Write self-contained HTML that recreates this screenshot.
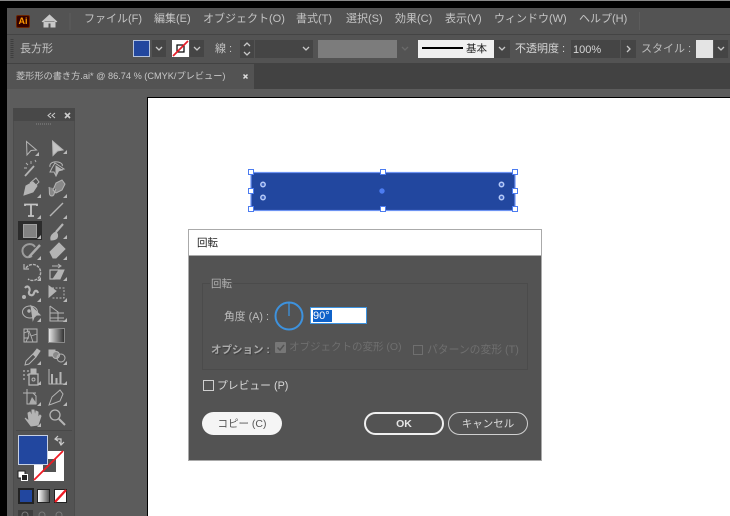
<!DOCTYPE html>
<html><head><meta charset="utf-8">
<style>
html,body{margin:0;padding:0;width:730px;height:516px;overflow:hidden;background:#000}
*{box-sizing:border-box}
body{font-family:"Liberation Sans","Noto Sans CJK JP",sans-serif;position:relative}
#w{position:absolute;left:0;top:0;width:730px;height:516px;overflow:hidden;filter:blur(.35px)}
.a{position:absolute}
.t{position:absolute;white-space:nowrap;line-height:14px;font-size:11px;color:#c4c4c4}
.dd{position:absolute;background:#454545}
svg{position:absolute;left:0;top:0}
</style></head><body><div id="w">
<!-- chrome backgrounds -->
<div class="a" style="left:0;top:0;width:730px;height:1px;background:#888"></div>
<div class="a" style="left:7px;top:8px;width:723px;height:26px;background:#535353"></div>
<div class="a" style="left:7px;top:34px;width:723px;height:1px;background:#444"></div>
<div class="a" style="left:7px;top:35px;width:723px;height:28px;background:#535353"></div>
<div class="a" style="left:7px;top:63px;width:723px;height:26px;background:#424242"></div>
<div class="a" style="left:7px;top:64px;width:247px;height:25px;background:#535353"></div>
<div class="a" style="left:7px;top:89px;width:723px;height:427px;background:#5c5c5c"></div>
<div class="a" style="left:147px;top:97px;width:583px;height:419px;background:#000"></div>
<div class="a" style="left:148px;top:98px;width:582px;height:418px;background:#fff"></div>
<div class="a" style="left:639px;top:12px;width:1px;height:18px;background:#5c5c5c"></div>

<!-- menu -->
<div class="a" style="left:16px;top:15px;width:14px;height:13px;background:#330000;border:1px solid #6b2400;border-radius:2px;color:#ff9a00;font:bold 9px/11px 'Liberation Sans',sans-serif;text-align:center">Ai</div>
<div class="t" style="left:84px;top:12px;font-size:11px">ファイル(F)</div>
<div class="t" style="left:154px;top:12px">編集(E)</div>
<div class="t" style="left:203px;top:12px">オブジェクト(O)</div>
<div class="t" style="left:296px;top:12px">書式(T)</div>
<div class="t" style="left:346px;top:12px">選択(S)</div>
<div class="t" style="left:395px;top:12px">効果(C)</div>
<div class="t" style="left:445px;top:12px">表示(V)</div>
<div class="t" style="left:494px;top:12px">ウィンドウ(W)</div>
<div class="t" style="left:579px;top:12px">ヘルプ(H)</div>

<!-- control bar -->
<div class="t" style="left:20px;top:42px">長方形</div>
<div class="a" style="left:133px;top:40px;width:17px;height:17px;background:#22479f;border:1px solid #b5c3dc"></div>
<div class="dd" style="left:152px;top:40px;width:14px;height:17px"></div>
<div class="a" style="left:172px;top:40px;width:17px;height:17px;background:#fff"></div>
<div class="dd" style="left:190px;top:40px;width:14px;height:17px"></div>
<div class="t" style="left:215px;top:42px">線 :</div>
<div class="dd" style="left:240px;top:40px;width:14px;height:18px"></div>
<div class="dd" style="left:255px;top:40px;width:44px;height:18px"></div>
<div class="dd" style="left:299px;top:40px;width:14px;height:18px"></div>
<div class="a" style="left:318px;top:40px;width:79px;height:18px;background:#7c7c7c"></div>
<div class="a" style="left:418px;top:40px;width:76px;height:18px;background:#f0f0f0"></div>
<div class="a" style="left:422px;top:47px;width:41px;height:2px;background:#000"></div>
<div class="t" style="left:466px;top:42px;color:#222;font-size:10.5px">基本</div>
<div class="dd" style="left:494px;top:40px;width:16px;height:18px"></div>
<div class="t" style="left:515px;top:42px;color:#d6d6d6">不透明度 :</div>
<div class="dd" style="left:571px;top:40px;width:49px;height:18px"></div>
<div class="t" style="left:573px;top:43px;color:#d6d6d6;font-size:11px">100%</div>
<div class="dd" style="left:621px;top:40px;width:15px;height:18px"></div>
<div class="t" style="left:641px;top:42px;color:#bbb">スタイル :</div>
<div class="a" style="left:696px;top:40px;width:17px;height:18px;background:#e4e4e4"></div>
<div class="dd" style="left:714px;top:40px;width:14px;height:18px"></div>

<!-- tab -->
<div class="t" style="left:16px;top:69px;font-size:9.2px;color:#c8c8c8">菱形形の書き方.ai* @ 86.74 % (CMYK/プレビュー)</div>

<!-- tool panel -->
<div class="a" style="left:13px;top:108px;width:62px;height:408px;background:#535353;border:1px solid #4c4c4c;border-bottom:0"></div>
<div class="a" style="left:13px;top:108px;width:62px;height:13px;background:#484848"></div>
<div class="a" style="left:18px;top:221px;width:24px;height:19px;background:#2c2c2c"></div>
<div class="a" style="left:16px;top:430px;width:56px;height:1px;background:#484848"></div>
<div class="a" style="left:49px;top:329px;width:15px;height:13px;background:linear-gradient(90deg,#e4e4e4,#333);outline:1px solid #8a8a8a"></div>

<!-- swatches -->
<div class="a" style="left:34px;top:451px;width:30px;height:30px;background:#fff"></div>
<div class="a" style="left:43px;top:459px;width:13px;height:13px;background:#535353"></div>
<div class="a" style="left:18px;top:435px;width:30px;height:30px;background:#22479f;border:1px solid #c6d0e4"></div>
<div class="a" style="left:20px;top:490px;width:12px;height:12px;background:#22479f;outline:2px solid #222"></div>
<div class="a" style="left:38px;top:490px;width:11px;height:12px;background:linear-gradient(90deg,#fff,#555);outline:1px solid #222"></div>
<div class="a" style="left:55px;top:490px;width:11px;height:12px;background:#fff;outline:1px solid #222"></div>
<div class="a" style="left:18px;top:510px;width:15px;height:6px;background:#3e3e3e"></div>

<!-- all vector icons -->
<svg width="730" height="516" viewBox="0 0 730 516" fill="none">
 <!-- home -->
 <path d="M42 22 49.500 15 57 22M44 21V27H48V23H51V27H55V21Z" fill="#c9c9c9" stroke="#c9c9c9"/>
 <path d="M70 13V30" stroke="#5c5c5c"/>
 <path d="M12 39V59" stroke="#3e3e3e" stroke-width="3" stroke-dasharray="1 1"/>
 <!-- dropdown chevrons -->
 <g stroke="#c8c8c8" stroke-width="1.300">
  <path d="M156 47 159 50 162 47M194 47 197 50 200 47M303 47 306 50 309 47M499 47 502 50 505 47M718 47 721 50 724 47"/>
  <path d="M244 46 247 43 250 46M244 52 247 55 250 52"/>
  <path d="M627 46 630 49 627 52"/>
  <path d="M402 47 405 50 408 47" stroke="#6a6a6a"/>
 </g>
 <!-- stroke swatch -->
 <rect x="177" y="45" width="7" height="7" stroke="#000" stroke-width="1.200"/>
 <path d="M173 56 188 41" stroke="#e8202a" stroke-width="1.800"/>
 <!-- tab close -->
 <path d="M243.500 74.500 247.500 78.500M247.500 74.500 243.500 78.500" stroke="#ddd" stroke-width="1.500"/>
 <!-- panel header -->
 <path d="M51 113 48 115.500 51 118M55 113 52 115.500 55 118" stroke="#ccc"/>
 <path d="M65 113 70 118M70 113 65 118" stroke="#ccc" stroke-width="1.600"/>
 <path d="M36 124H52" stroke="#6d6d6d" stroke-width="2" stroke-dasharray="1 1"/>

 <g stroke="#b4b4b4" fill="none" stroke-width="1">
 <!-- r1 -->
 <path d="M26.500 141.500 36.500 150 31 150.500 27 155Z"/>
 <path d="M52.500 141 63 150 57.500 151 53 155.500Z" fill="#c4c4c4"/>
 <!-- r2 -->
 <path d="M25 176 34 166" stroke-width="1.800"/>
 <path d="M31 161V164M26 163 28 165M35 160 36 162M24 168H27" stroke-width=".9"/>
 <path d="M50 167C49 163 54 161 58 162 62 163 63 165 62 166M55 163 64 169 59 170 56 176 54 172 50 172 52 168Z"/>
 <path d="M56 166 62 170 58 171 56 174Z" fill="#b4b4b4"/>
 <!-- r3 -->
 <path d="M24 195 26 186 33 182 37 186 33 192Z" fill="#b4b4b4"/>
 <path d="M30 183 36 178 39 182 35 186"/>
 <path d="M49 187C50 191 48 196 52 196 55 196 54 191 56 189M53 190 56 183 62 180 65 184 62 190 56 193Z" fill="#b4b4b4" fill-opacity=".55"/>
 <!-- r4 -->
 <path d="M25 206V204.500H37V206M31 205V216M28 216H34" stroke-width="1.800" stroke="#c4c4c4"/>
 <path d="M50 216 63 203" stroke-width="1.400"/>
 <!-- r5 -->
 <rect x="23.500" y="224.500" width="13" height="13" fill="#828282" stroke="#a0a0a0"/>
 <path d="M51 240C50 236 53 233 56 232 58 234 58 236 57 238 55 240 53 240 51 240Z" fill="#b4b4b4"/>
 <path d="M56 232 63 224" stroke-width="2.200"/>
 <!-- r6 -->
 <path d="M32 256C25 260 21 253 23 248 26 243 33 243 35 247" stroke-width="2" stroke="#9c9c9c"/>
 <path d="M29 257 40 245" stroke-width="2.500" stroke="#aaa"/>
 <path d="M50 252 59 243 65 249 56 258 53 258Z" fill="#b4b4b4"/>
 <!-- r7 -->
 <path d="M26 268A8 8 0 1 1 28 279" stroke-width="1.400" stroke-dasharray="3 1"/>
 <path d="M24 264V269H29" stroke-width="1.200"/>
 <path d="M50 270H59L55 279H50Z" stroke-width="1.200"/>
 <path d="M59 270H64L60 279H53Z" fill="#b4b4b4"/>
 <path d="M52 266H60M58 264 61 266 58 268"/>
 <!-- r8 -->
 <path d="M25 288C28 284 31 289 29 292 28 295 33 297 34 293 35 290 37 290 38 293" stroke-width="2.200"/>
 <circle cx="24" cy="297" r="1.500" fill="#b4b4b4"/>
 <path d="M49 286 56 291 49 297Z" fill="#b4b4b4"/>
 <path d="M52 288H64V298H52" stroke-dasharray="2 1.500"/>
 <!-- r9 -->
 <ellipse cx="30" cy="312" rx="7.500" ry="6"/>
 <path d="M31 306 40 315 35 315 33 320Z" fill="#b4b4b4"/>
 <circle cx="29" cy="311" r="1.200" fill="#b4b4b4"/>
 <path d="M50 306V321H65M50 306 58 312V321M50 313H64M50 318H64"/>
 <!-- r10 -->
 <rect x="24" y="329" width="13" height="13"/>
 <path d="M24 333 29 331 31 336 37 334M27 329 29 335 26 342M31 336 33 342M24 338H29" stroke-width=".9"/>
 <!-- r11 -->
 <path d="M25 365 26 361 33 354 36 357 29 364Z"/>
 <path d="M33 354 37 349 40 351 36 357" fill="#b4b4b4"/>
 <path d="M49 350H55V356H49Z" fill="#b4b4b4"/>
 <circle cx="56" cy="355" r="3.500" fill="#888"/>
 <circle cx="61" cy="358" r="4"/>
 <!-- r12 -->
 <path d="M23 371H25M27 371H29M31 371H33M23 375H25M27 375H29M23 379H25" stroke-width="1.200"/>
 <rect x="29" y="374" width="9" height="11" stroke-width="1.300"/>
 <circle cx="33.500" cy="379.500" r="1.500"/>
 <path d="M31 374V369H36V374" fill="#b4b4b4"/>
 <path d="M49 369V384H65" />
 <path d="M52 374V384M56.500 378V384M60.500 372V384" stroke-width="2"/>
 <!-- r13 -->
 <path d="M27 389V404H36V396L33 393H27M23 393H36" />
 <path d="M32 397 37 404H29Z" fill="#aaa" stroke="none"/>
 <path d="M49 405 52 397 60 390 63 394 60 401 52 404Z"/>
 <!-- r14 -->
 <path d="M25 418 29 421 28 413 30 412 32 417 32 410 34 410 35 417 36 411 38 412 38 418 40 415 41 416 38 425 31 426Z" fill="#b4b4b4"/>
 <circle cx="55" cy="415" r="5" stroke-width="1.300"/>
 <path d="M59 419 65 425" stroke-width="2"/>
 <!-- swap/default -->
 <path d="M58 436 55 439 58 441M55 439H61V444M59 441.500 61 445 64 442" stroke-width="1.200" stroke="#ccc"/>
 <rect x="18" y="471" width="7" height="7" fill="#fff" stroke="#222"/>
 <rect x="21.500" y="474.500" width="6" height="6" fill="#222" stroke="#fff"/>
 </g>
 <path d="M34 480 63 451" stroke="#f01b24" stroke-width="1.800"/>
 <path d="M55 502 66 490" stroke="#f01b24" stroke-width="2.400"/>
 <g fill="#b8b8b8" stroke="none" transform="translate(-1 -1)">
  <path d="M40 157V153L36 157ZM68 155V151L64 155ZM42 199V195L38 199ZM68 199V195L64 199ZM42 220V216L38 220ZM68 220V216L64 220ZM42 240V236L38 240ZM68 240V236L64 240ZM42 261V257L38 261ZM68 261V257L64 261ZM42 282V278L38 282ZM68 282V278L64 282ZM42 303V299L38 303ZM68 303V299L64 303ZM42 323V319L38 323ZM68 323V319L64 323ZM42 366V362L38 366ZM68 366V362L64 366ZM42 386V382L38 386ZM68 386V382L64 386ZM42 407V403L38 407ZM68 407V403L64 407ZM42 428V424L38 428Z"/>
 </g>
 <g stroke="#7a7a7a"><circle cx="25" cy="515" r="3"/><circle cx="42" cy="515" r="3"/><circle cx="59" cy="515" r="3"/></g>

 <!-- selection shape -->
 <rect x="251" y="172.500" width="264" height="38" fill="#22479f" stroke="#6d93f2" stroke-width="1.200"/>
 <g fill="#fff" stroke="#4c7cf0">
  <rect x="248.500" y="169.500" width="5" height="5"/><rect x="380.500" y="169.500" width="5" height="5"/><rect x="512.500" y="169.500" width="5" height="5"/>
  <rect x="248.500" y="188.500" width="5" height="5"/><rect x="512.500" y="188.500" width="5" height="5"/>
  <rect x="248.500" y="206.500" width="5" height="5"/><rect x="380.500" y="206.500" width="5" height="5"/><rect x="512.500" y="206.500" width="5" height="5"/>
 </g>
 <circle cx="382" cy="191" r="2.700" fill="#4c7cf0"/>
 <g fill="#3d62bd" stroke="#b4c8f7" stroke-width="1.500">
  <circle cx="263" cy="184.500" r="2.200"/><circle cx="263" cy="197.500" r="2.200"/><circle cx="501.500" cy="184.500" r="2.200"/><circle cx="501.500" cy="197.500" r="2.200"/>
 </g>
</svg>

<!-- dialog -->
<div class="a" style="left:188px;top:229px;width:354px;height:232px;background:#535353;border:1px solid #aaa">
 <div class="a" style="left:0;top:0;width:352px;height:26px;background:#fff;border-bottom:1px solid #aaa"></div>
 <div class="t" style="left:8px;top:6px;color:#222;font-size:10.500px">回転</div>
 <div class="a" style="left:13px;top:53px;width:326px;height:87px;border:1px solid #4b4b4b"></div>
 <div class="t" style="left:21px;top:47px;font-size:10.500px;color:#b0b0b0;background:#535353;padding:0 1px">回転</div>
 <div class="t" style="left:35px;top:80px;font-size:10.800px;color:#bdbdbd">角度 (A) :</div>
 <svg width="30" height="30" style="left:85px;top:71px" viewBox="0 0 30 30" fill="none"><circle cx="15" cy="15" r="13.500" stroke="#3d92de" stroke-width="2"/><path d="M15 2V15" stroke="#3d92de" stroke-width="1.300"/></svg>
 <div class="a" style="left:121px;top:77px;width:57px;height:17px;background:#fff;border:1px solid #3d92de"></div>
 <div class="a" style="left:124px;top:80px;width:19px;height:12px;background:#0f62c9"></div>
 <div class="t" style="left:124px;top:79px;font-size:11px;color:#fff">90°</div>
 <div class="t" style="left:22px;top:113px;font-size:10.500px;font-weight:bold;color:#ababab;text-shadow:1px 1px 1px #3c3c3c">オプション :</div>
 <div class="a" style="left:86px;top:112px;width:11px;height:11px;background:#777;border-radius:1px"></div>
 <svg width="11" height="11" style="left:86px;top:112px" viewBox="0 0 11 11" fill="none"><path d="M2.500 5.500 5 8 9 3" stroke="#535353" stroke-width="1.500"/></svg>
 <div class="t" style="left:100px;top:110px;font-size:10.500px;color:#6f6f6f">オブジェクトの変形 (O)</div>
 <div class="a" style="left:224px;top:115px;width:10px;height:10px;border:1px solid #6f6f6f"></div>
 <div class="t" style="left:238px;top:113px;font-size:10.800px;color:#6f6f6f">パターンの変形 (T)</div>
 <div class="a" style="left:14px;top:150px;width:11px;height:11px;border:1px solid #cfcfcf"></div>
 <div class="t" style="left:28px;top:149px;font-size:10.800px;color:#d8d8d8">プレビュー (P)</div>
 <div class="a" style="left:13px;top:182px;width:80px;height:23px;background:#f5f5f5;border-radius:12px;color:#555;font-size:10.500px;line-height:24px;text-align:center">コピー (C)</div>
 <div class="a" style="left:175px;top:182px;width:80px;height:23px;border:2px solid #f0f0f0;border-radius:12px;color:#e6e6e6;font-size:10.500px;font-weight:bold;line-height:20px;text-align:center">OK</div>
 <div class="a" style="left:259px;top:182px;width:80px;height:23px;border:1px solid #d0d0d0;border-radius:12px;color:#dcdcdc;font-size:10.500px;line-height:23px;text-align:center">キャンセル</div>
</div>
</div></body></html>
